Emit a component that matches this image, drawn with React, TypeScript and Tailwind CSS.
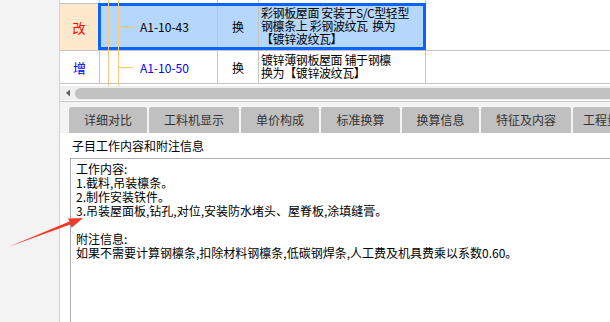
import React from 'react';

const cjk = "font-['Noto_Sans_CJK_SC',sans-serif]";
const grid = 'border-[#c4c4c4]';

const tabs: { label: string; w: string }[] = [
  { label: '详细对比', w: 'w-[78px]' },
  { label: '工料机显示', w: 'w-[90px]' },
  { label: '单价构成', w: 'w-[78px]' },
  { label: '标准换算', w: 'w-[79px]' },
  { label: '换算信息', w: 'w-[77px]' },
  { label: '特征及内容', w: 'w-[90px]' },
  { label: '工程量明细', w: 'w-[80px]' },
];

const workLines = [
  '工作内容:',
  '1.截料,吊装檩条。',
  '2.制作安装铁件。',
  '3.吊装屋面板,钻孔,对位,安装防水堵头、屋脊板,涂填缝膏。',
  '\u00a0',
  '附注信息:',
  '如果不需要计算钢檩条,扣除材料钢檩条,低碳钢焊条,人工费及机具费乘以系数0.60。',
];

function Connector() {
  return <span className="w-[15px] h-px bg-[#ffc878] shrink-0" />;
}

export default function App() {
  return (
    <div className={`relative w-[610px] h-[322px] overflow-hidden flex bg-white text-black ${cjk}`}>
      {/* left strip */}
      <div className="w-[60px] shrink-0 bg-[#f3f3f3] border-r border-[#d2d2d2]" />

      <div className="flex-1 min-w-0 flex flex-col">
        {/* upper grid */}
        <div className="relative">
          {/* sliver of previous row */}
          <div className="flex h-[3px]">
            <div className={`w-[40px] border-r ${grid}`} />
            <div className={`w-[118px] border-r ${grid}`} />
            <div className={`w-[41px] border-r ${grid}`} />
            <div className={`w-[167px] border-r ${grid}`} />
            <div className="flex-1" />
          </div>

          {/* selected row */}
          <div className="flex h-[47px] text-[12px] leading-[13px]">
            <div className={`w-[38px] border-t ${grid} bg-[#fde8cb] flex items-center justify-center text-[#ff0000] text-[13px]`}>
              改
            </div>
            <div className="w-[328px] flex border-[3px] border-[#0a64f5] bg-[#b6d7fc]">
              <div className="w-[116px] flex items-center pl-[17px]">
                <Connector />
                <span className="ml-[7px]">A1-10-43</span>
              </div>
              <div className={`w-[41px] border-l ${grid} flex items-center justify-center`}>换</div>
              <div className={`flex-1 border-l ${grid} pl-[2px] whitespace-nowrap overflow-hidden tracking-[-0.4px]`}>
                <div>彩钢板屋面 安装于S/C型轻型</div>
                <div>钢檩条上 彩钢波纹瓦&nbsp;&nbsp;换为</div>
                <div>【镀锌波纹瓦】</div>
              </div>
            </div>
            <div className="flex-1" />
          </div>

          {/* second row */}
          <div className={`flex h-[34px] border-y ${grid} text-[12px] leading-[13px]`}>
            <div className={`w-[40px] border-r ${grid} flex items-center justify-center text-[#0000ff] text-[13px]`}>
              增
            </div>
            <div className={`w-[118px] border-r ${grid} flex items-center pl-[18px]`}>
              <Connector />
              <span className="ml-[7px] text-[#0000ff]">A1-10-50</span>
            </div>
            <div className={`w-[41px] border-r ${grid} flex items-center justify-center`}>换</div>
            <div className={`w-[167px] border-r ${grid} pl-[2px] pt-[2px] whitespace-nowrap overflow-hidden tracking-[-0.4px]`}>
              <div>镀锌薄钢板屋面 铺于钢檩</div>
              <div>换为【镀锌波纹瓦】</div>
            </div>
            <div className="flex-1" />
          </div>

          <div className="h-[2px]" />

          {/* tree guide lines */}
          <div className="absolute left-[48px] top-0 w-px h-[86px] bg-[#ffc878]" />
          <div className="absolute left-[58px] top-0 w-px h-[86px] bg-[#ffc878]" />
        </div>

        {/* horizontal scrollbar */}
        <div className="h-[14px] bg-[#efefef] flex items-center">
          <svg width="15" height="14" viewBox="0 0 15 14" className="shrink-0">
            <path d="M6 7 L10 3.5 L10 10.5 Z" fill="#606060" />
          </svg>
          <div className="flex-1 h-[11px] rounded-l-full bg-[#c2c2c2]" />
        </div>
        <div className="h-px bg-white" />
        <div className="h-px bg-[#c8c8c8]" />

        {/* tab strip */}
        <div className="h-[31px] bg-[#f4f4f4] flex items-end gap-[2px] pl-[9px]">
          {tabs.map((t) => (
            <div
              key={t.label}
              className={`${t.w} shrink-0 h-[26px] rounded-t-[2px] bg-[#c0c0c0] flex items-center justify-center text-[12px] text-[#333] whitespace-nowrap overflow-hidden`}
            >
              {t.label}
            </div>
          ))}
        </div>

        {/* info panel */}
        <div className="flex-1 flex flex-col pl-[10px] pt-[6px]">
          <div className="text-[12px] leading-[14px] pl-[2px] h-[19px]">子目工作内容和附注信息</div>
          <div className="flex-1 border-t border-l border-[#adadad] pl-[5px] pt-[3px] text-[12px] leading-[14px] whitespace-nowrap">
            {workLines.map((l, i) => (
              <div key={i}>{l}</div>
            ))}
          </div>
        </div>
      </div>

      {/* red annotation arrow */}
      <svg className="absolute left-0 top-0 pointer-events-none" width="610" height="322" viewBox="0 0 610 322">
        <polygon
          points="8,247 69.4,221.6 68.1,218.4 83,218 71.7,227.7 70.4,224.5"
          fill="#f23a2b"
        />
      </svg>
    </div>
  );
}
